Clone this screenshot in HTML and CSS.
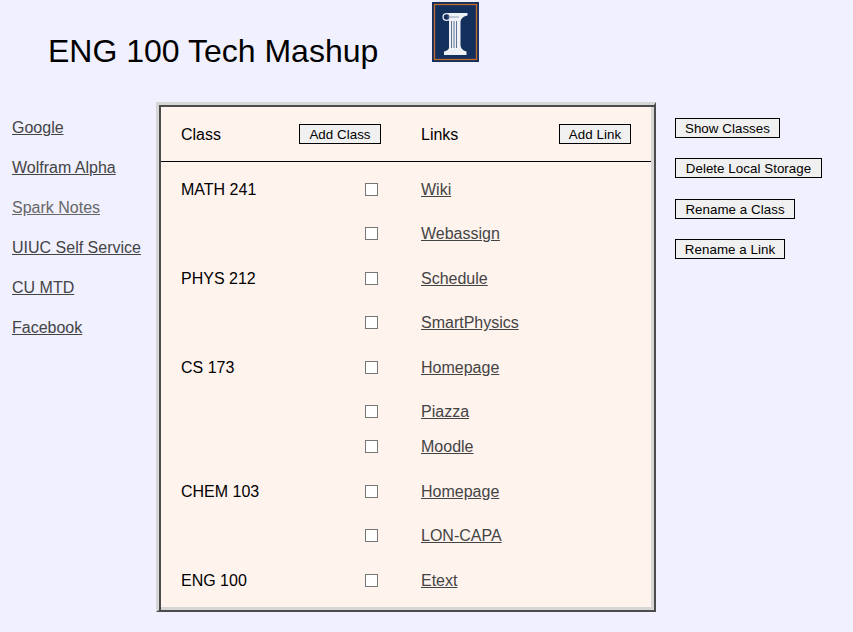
FILE: index.html
```html
<!DOCTYPE html>
<html lang="en">
<head>
<meta charset="utf-8">
<title>ENG 100 Tech Mashup</title>
<link rel="stylesheet" href="styles.css">
</head>
<body>
<header class="masthead">
  <h1 class="title">ENG 100 Tech Mashup</h1>
  <svg class="logo" width="47" height="60" viewBox="0 0 47 60" aria-label="University of Illinois logo">
    <rect width="47" height="60" fill="#13305c"/>
    <rect x="2.5" y="2.5" width="42" height="55" fill="none" stroke="#c06a2c" stroke-width="1.3"/>
    <path d="M15 11 H35.5 V13.5 C30.5 14.5 28.5 17 28.5 21 V42 C28.5 46.5 30.5 48.5 34.5 49.5 V53 H12 V49.5 C14.5 49 16.5 48 17 46 V18 H15 Z" fill="#eef1f5"/>
    <circle cx="14.5" cy="15" r="3.4" fill="#13305c" stroke="#dfe5ec" stroke-width="1.4"/>
    <path d="M19.5 19 V46 M22 19 V46 M24.5 19 V46" stroke="#5f7396" stroke-width="1" fill="none"/>
    <path d="M15.5 15 H27" stroke="#7d8ea9" stroke-width=".8" fill="none"/>
  </svg>
</header>
<div class="layout">
  <nav class="sites">
    <a href="#">Google</a>
    <a href="#">Wolfram Alpha</a>
    <a href="#" class="visited">Spark Notes</a>
    <a href="#">UIUC Self Service</a>
    <a href="#">CU MTD</a>
    <a href="#">Facebook</a>
  </nav>
  <main class="panel">
    <div class="panel-head">
      <span class="head-class">Class</span>
      <button class="btn head-btn" type="button">Add Class</button>
      <span class="head-links">Links</span>
      <button class="btn head-btn-link" type="button">Add Link</button>
    </div>
    <div class="rows">
      <div class="row"><span class="name">MATH 241</span><span class="check"></span><a href="#">Wiki</a></div>
      <div class="row"><span class="name"></span><span class="check"></span><a href="#">Webassign</a></div>
      <div class="row"><span class="name">PHYS 212</span><span class="check"></span><a href="#">Schedule</a></div>
      <div class="row"><span class="name"></span><span class="check"></span><a href="#">SmartPhysics</a></div>
      <div class="row"><span class="name">CS 173</span><span class="check"></span><a href="#">Homepage</a></div>
      <div class="row"><span class="name"></span><span class="check"></span><a href="#">Piazza</a></div>
      <div class="row row-tight"><span class="name"></span><span class="check"></span><a href="#">Moodle</a></div>
      <div class="row"><span class="name">CHEM 103</span><span class="check"></span><a href="#">Homepage</a></div>
      <div class="row"><span class="name"></span><span class="check"></span><a href="#">LON-CAPA</a></div>
      <div class="row"><span class="name">ENG 100</span><span class="check"></span><a href="#">Etext</a></div>
    </div>
  </main>
  <aside class="tools">
    <button class="btn btn-show" type="button">Show Classes</button>
    <button class="btn btn-delete" type="button">Delete Local Storage</button>
    <button class="btn btn-rename-class" type="button">Rename a Class</button>
    <button class="btn btn-rename-link" type="button">Rename a Link</button>
  </aside>
</div>
</body>
</html>
```
FILE: styles.css
```css
html, body { margin: 0; padding: 0; }
body {
  width: 853px;
  height: 632px;
  overflow: hidden;
  background: #f0f0ff;
  color: #000;
  font-family: "Liberation Sans", Arial, sans-serif;
  font-size: 16px;
}
a { color: #444; text-decoration: underline; }
.masthead {
  display: flex;
  align-items: flex-start;
  height: 102px;
  padding: 2px 0 0 48px;
  box-sizing: border-box;
}
.title {
  margin: 29px 54px 0 0;
  font-size: 32px;
  font-weight: 400;
  line-height: 40px;
  white-space: nowrap;
}
.logo { display: block; }
.layout { display: flex; align-items: flex-start; }
.sites {
  width: 156px;
  flex: none;
  box-sizing: border-box;
  padding: 17px 0 0 12px;
  display: flex;
  flex-direction: column;
  align-items: flex-start;
  gap: 22px;
  line-height: 18px;
}
.sites .visited { color: #666; }
.panel {
  width: 500px;
  height: 510px;
  flex: none;
  box-sizing: border-box;
  border-style: solid;
  border-width: 3px 2px 2px 3px;
  border-color: #d6d6d6 #4c4c4c #4c4c4c #d6d6d6;
  padding: 2px 3px 3px 2px;
  background: #fff3ee;
  box-shadow: inset 2px 2px 0 #4c4c4c, inset -3px -3px 0 #d6d6d6;
}
.panel-head {
  display: flex;
  align-items: center;
  height: 55px;
  box-sizing: border-box;
  border-bottom: 1px solid #000;
  padding: 0 20px;
}
.head-class { width: 118px; padding-top: 2px; }
.head-btn { width: 82px; }
.head-links { margin-left: 40px; width: 138px; padding-top: 2px; }
.head-btn-link { width: 72px; }
.btn {
  height: 20px;
  padding: 1px 0 0;
  border: 1px solid #000;
  border-radius: 0;
  background: #f0f0f0;
  color: #000;
  font-family: "Liberation Sans", Arial, sans-serif;
  font-size: 13.33px;
  letter-spacing: 0.05px;
  line-height: 18px;
  white-space: nowrap;
}
.btn-show { width: 105px; }
.btn-delete { width: 147px; }
.btn-rename-class { width: 120px; }
.btn-rename-link { width: 110px; }
.rows { padding-top: 5px; }
.row {
  display: flex;
  align-items: center;
  height: 44.5px;
  padding-left: 20px;
}
.row a, .row .name { padding-top: 1px; }
.row-tight { height: 35px; margin: -5px 0 5px; }
.name { width: 184px; }
.check {
  width: 13px;
  height: 13px;
  box-sizing: border-box;
  border: 1px solid #767676;
  background: #fff;
  margin-right: 43px;
}
.tools {
  padding: 16px 0 0 19px;
  display: flex;
  flex-direction: column;
  align-items: flex-start;
  gap: 20.25px;
}
```
